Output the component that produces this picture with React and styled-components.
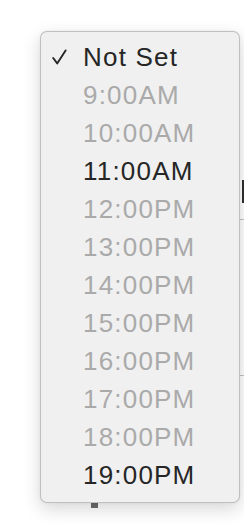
import React from "react";
import styled, { createGlobalStyle } from "styled-components";

const Global = createGlobalStyle`
  html, body { margin: 0; padding: 0; background: #ffffff; }
  body { font-family: "Liberation Sans", Arial, sans-serif; }
`;

const Page = styled.div`
  position: relative;
  width: 244px;
  height: 525px;
  overflow: hidden;
  display: flex;
  background: #ffffff;
`;

const LeftArea = styled.div`
  flex: 1;
  display: flex;
  flex-direction: column;
`;

const Handle = styled.div`
  margin-top: 503px;
  margin-left: 91px;
  width: 7px;
  height: 5px;
  background: #6a6a6a;
`;

const RightStrip = styled.div`
  width: 4px;
  display: flex;
  flex-direction: column;
`;

const EdgeBlock = styled.div`
  margin-top: 180px;
  margin-left: 2px;
  width: 2px;
  height: 23px;
  background: #2e2e2e;
`;

const Divider = styled.div`
  height: 1px;
  background: #c2c2c2;
  margin-top: ${(p) => p.$gap}px;
`;

const Menu = styled.div`
  position: absolute;
  left: 40px;
  top: 31px;
  width: 200px;
  box-sizing: border-box;
  padding: 6px 0 8px;
  background: #f0f0f0;
  border: 1px solid rgba(0, 0, 0, 0.2);
  border-radius: 7px;
  box-shadow: 0 6px 18px rgba(0, 0, 0, 0.16), 0 0 3px rgba(0, 0, 0, 0.06);
  display: flex;
  flex-direction: column;
`;

const Item = styled.div`
  height: 38px;
  line-height: 38px;
  display: flex;
  align-items: center;
  font-family: "Liberation Sans", Arial, sans-serif;
  font-size: 26px;
  letter-spacing: 1.2px;
  white-space: nowrap;
  color: ${(p) => (p.$disabled ? "#aaaaaa" : "#262626")};
`;

const CheckSlot = styled.span`
  width: 42px;
  flex: 0 0 42px;
  display: flex;
  justify-content: flex-start;
  padding-left: 11px;
  box-sizing: border-box;
`;

const Check = () => (
  <svg width="15" height="16" viewBox="0 0 15 16" fill="none">
    <polyline
      points="1.2,9 5.2,14.4 13.6,1.4"
      stroke="#262626"
      strokeWidth="1.9"
      strokeLinecap="round"
      strokeLinejoin="round"
    />
  </svg>
);

const items = [
  { label: "Not Set", checked: true },
  { label: "9:00AM", disabled: true },
  { label: "10:00AM", disabled: true },
  { label: "11:00AM" },
  { label: "12:00PM", disabled: true },
  { label: "13:00PM", disabled: true },
  { label: "14:00PM", disabled: true },
  { label: "15:00PM", disabled: true },
  { label: "16:00PM", disabled: true },
  { label: "17:00PM", disabled: true },
  { label: "18:00PM", disabled: true },
  { label: "19:00PM" },
];

export default function App() {
  return (
    <>
      <Global />
      <Page>
        <LeftArea>
          <Handle />
        </LeftArea>
        <RightStrip>
          <EdgeBlock />
          <Divider $gap={16} />
          <Divider $gap={155} />
        </RightStrip>
        <Menu>
          {items.map((it) => (
            <Item key={it.label} $disabled={it.disabled}>
              <CheckSlot>{it.checked ? <Check /> : null}</CheckSlot>
              {it.label}
            </Item>
          ))}
        </Menu>
      </Page>
    </>
  );
}
